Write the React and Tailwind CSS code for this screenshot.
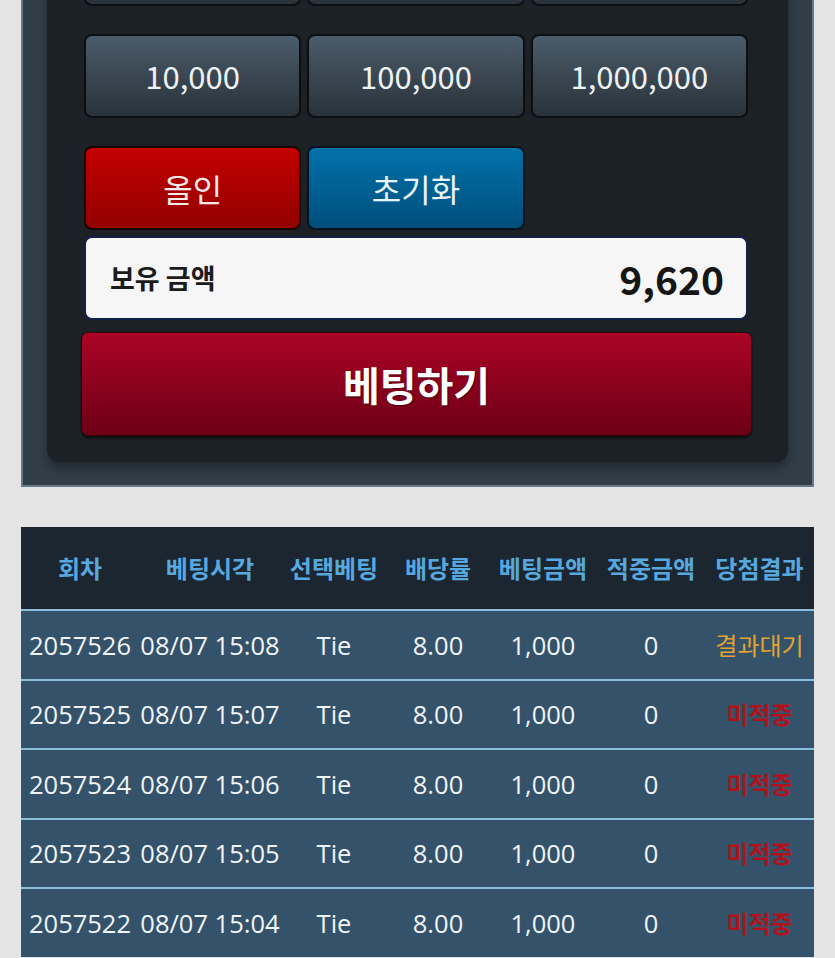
const KR = { fontFamily: '"Noto Sans CJK KR", "Noto Sans", sans-serif' };
const NUM = { fontFamily: '"Open Sans", "Noto Sans CJK KR", sans-serif' };

const rows = [
  { id: '2057526', time: '08/07 15:08', result: '결과대기', pending: true },
  { id: '2057525', time: '08/07 15:07', result: '미적중' },
  { id: '2057524', time: '08/07 15:06', result: '미적중' },
  { id: '2057523', time: '08/07 15:05', result: '미적중' },
  { id: '2057522', time: '08/07 15:04', result: '미적중' },
];

const headers = ['회차', '베팅시각', '선택베팅', '배당률', '베팅금액', '적중금액', '당첨결과'];
const cols = 'grid grid-cols-[118px_142px_106px_102px_108px_108px_109px]';

function ChipButton({ children }) {
  return (
    <button className="h-[84px] rounded-[8px] border-2 border-[#0b0f12] bg-gradient-to-b from-[#4b5c6a] to-[#29333b] text-[31px] text-[#eef2f5]">
      {children}
    </button>
  );
}

export default function App() {
  return (
    <div className="min-h-[958px] w-[835px] overflow-hidden bg-[#e4e4e4]" style={KR}>
      {/* betting panel (top part scrolled out of view) */}
      <div className="mx-[21px] -mt-[140px] border-x-2 border-b-2 border-[#67788a] bg-[#313e48] px-[24px] pb-[23px]">
        <div className="rounded-b-[12px] bg-[#1c2125] pb-[26px] pl-[37px] pr-[40px] pt-[62px] shadow-[0_6px_10px_rgba(0,0,0,0.35)]">
          <div className="grid grid-cols-3 gap-x-[6px] gap-y-[28px]">
            <div className="h-[84px] rounded-[8px] border-2 border-[#0b0f12] bg-gradient-to-b from-[#4b5c6a] to-[#29333b]" />
            <div className="h-[84px] rounded-[8px] border-2 border-[#0b0f12] bg-gradient-to-b from-[#4b5c6a] to-[#29333b]" />
            <div className="h-[84px] rounded-[8px] border-2 border-[#0b0f12] bg-gradient-to-b from-[#4b5c6a] to-[#29333b]" />
            <ChipButton>10,000</ChipButton>
            <ChipButton>100,000</ChipButton>
            <ChipButton>1,000,000</ChipButton>
            <button className="h-[84px] rounded-[8px] border-2 border-[#1a0505] bg-gradient-to-b from-[#c40000] to-[#920000] text-[32px] text-[#f6eaea]">
              올인
            </button>
            <button className="h-[84px] rounded-[8px] border-2 border-[#06121c] bg-gradient-to-b from-[#0172aa] to-[#004f7d] text-[32px] text-[#eaf4fa]">
              초기화
            </button>
          </div>

          <div className="mt-[6px] flex h-[84px] items-center justify-between rounded-[8px] border-2 border-[#13204a] bg-[#f6f6f6] pl-[24px] pr-[22px]">
            <span className="text-[27px] font-bold text-[#1b1b1b]">보유 금액</span>
            <span className="text-[39px] font-bold text-[#161616]">9,620</span>
          </div>

          <button className="-ml-[3px] mt-[12px] flex h-[104px] w-[671px] items-center justify-center rounded-[7px] border border-[#3a0008] bg-gradient-to-b from-[#ab0425] to-[#6d0016] text-[40px] font-bold text-white shadow-[0_2px_2px_rgba(0,0,0,0.6)] [text-shadow:1px_1px_1px_rgba(0,0,0,0.5)]">
            베팅하기
          </button>
        </div>
      </div>

      {/* history table */}
      <div className="mx-[21px] mt-[40px] bg-[#34526a]">
        <div className={`${cols} h-[82px] items-center bg-[#1b2630] text-center text-[24px] font-bold text-[#57a8df]`}>
          {headers.map((h) => (
            <div key={h} className="whitespace-nowrap">{h}</div>
          ))}
        </div>
        {rows.map((r) => (
          <div key={r.id} className={`${cols} h-[69.5px] items-center border-t-2 border-[#8bbcd9] text-center text-[25.5px] text-[#f2f5f7]`}>
            <div style={NUM}>{r.id}</div>
            <div style={NUM} className="whitespace-nowrap">{r.time}</div>
            <div style={NUM}>Tie</div>
            <div style={NUM}>8.00</div>
            <div style={NUM}>1,000</div>
            <div style={NUM}>0</div>
            <div className={r.pending ? 'text-[24px] text-[#e3a332]' : 'text-[24px] font-bold text-[#b3121d]'}>
              {r.result}
            </div>
          </div>
        ))}
      </div>
    </div>
  );
}
